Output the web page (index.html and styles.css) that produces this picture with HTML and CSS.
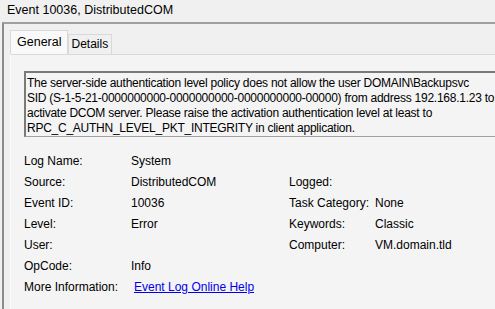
FILE: index.html
```html
<!DOCTYPE html>
<html lang="en">
<head>
  <meta charset="UTF-8" />
  <title>Event 10036, DistributedCOM</title>
  <link rel="stylesheet" href="styles.css">
</head>
<body>
  <div class="title">Event 10036, DistributedCOM</div>

  <div class="frame">
    <div class="tabs">
      <div class="tab active">General</div>
      <div class="tab">Details</div>
    </div>

    <div class="panel">
      <div class="message">
        The server-side authentication level policy does not allow the user DOMAIN\Backupsvc<br>
        SID (S-1-5-21-0000000000-0000000000-0000000000-00000) from address 192.168.1.23 to<br>
        activate DCOM server. Please raise the activation authentication level at least to<br>
        RPC_C_AUTHN_LEVEL_PKT_INTEGRITY in client application.
      </div>

      <div class="props">
        <span>Log Name:</span><span>System</span><span></span><span></span>
        <span>Source:</span><span>DistributedCOM</span><span>Logged:</span><span></span>
        <span>Event ID:</span><span>10036</span><span>Task Category:</span><span>None</span>
        <span>Level:</span><span>Error</span><span>Keywords:</span><span>Classic</span>
        <span>User:</span><span></span><span>Computer:</span><span>VM.domain.tld</span>
        <span>OpCode:</span><span>Info</span><span></span><span></span>
        <span>More Information:</span><a class="link" href="#">Event Log Online Help</a>
      </div>
    </div>
  </div>
</body>
</html>
```

FILE: styles.css
```css
:root {
  --bg: #f0f0f0;
  --panel: #f4f4f4;
  --line: #a0a0a0;
  --text: #000000;
}

* {
  box-sizing: border-box;
}

html, body {
  margin: 0;
  height: 100%;
  overflow: hidden;
}

body {
  display: flex;
  flex-direction: column;
  background: var(--bg);
  font-family: "Liberation Sans", Arial, sans-serif;
  font-size: 12px;
  color: var(--text);
}

.title {
  height: 22px;
  line-height: 20px;
  padding-left: 7px;
  font-size: 12.5px;
}

.frame {
  flex: 1;
  display: flex;
  flex-direction: column;
  margin-left: 2px;
  border-top: 2px solid var(--line);
  border-left: 2px solid #8c8c8c;
  padding: 4px 0 0 6px;
  min-height: 0;
}

.tabs {
  display: flex;
  align-items: flex-end;
  height: 26px;
}

.tab {
  height: 20px;
  line-height: 19px;
  padding: 0 3px 0 2px;
  border: 1px solid #d9d9d9;
  border-bottom: none;
  background: var(--bg);
}

.tab.active {
  height: 24px;
  line-height: 22px;
  padding: 0 6px;
  background: #f9f9f9;
  font-size: 12.5px;
}

.panel {
  flex: 1;
  border-top: 1px solid #d9d9d9;
  border-left: 1px solid #fafafa;
  background: var(--panel);
  padding: 16px 0 0 13px;
  overflow: hidden;
}

.message {
  width: 480px;
  height: 66px;
  border: 1px solid var(--line);
  border-top: 2px solid #7a7a7a;
  border-left: 2px solid #7a7a7a;
  padding: 3px 0 0 1px;
  line-height: 15px;
  letter-spacing: -0.25px;
  white-space: nowrap;
}

.props {
  display: grid;
  grid-template-columns: 107px 158px 86px 1fr;
  grid-auto-rows: 21px;
  align-items: center;
  margin-top: 13px;
}

.link {
  grid-column: 2 / 5;
  color: #0000ee;
  text-decoration: underline;
  margin-left: 3px;
}
```
